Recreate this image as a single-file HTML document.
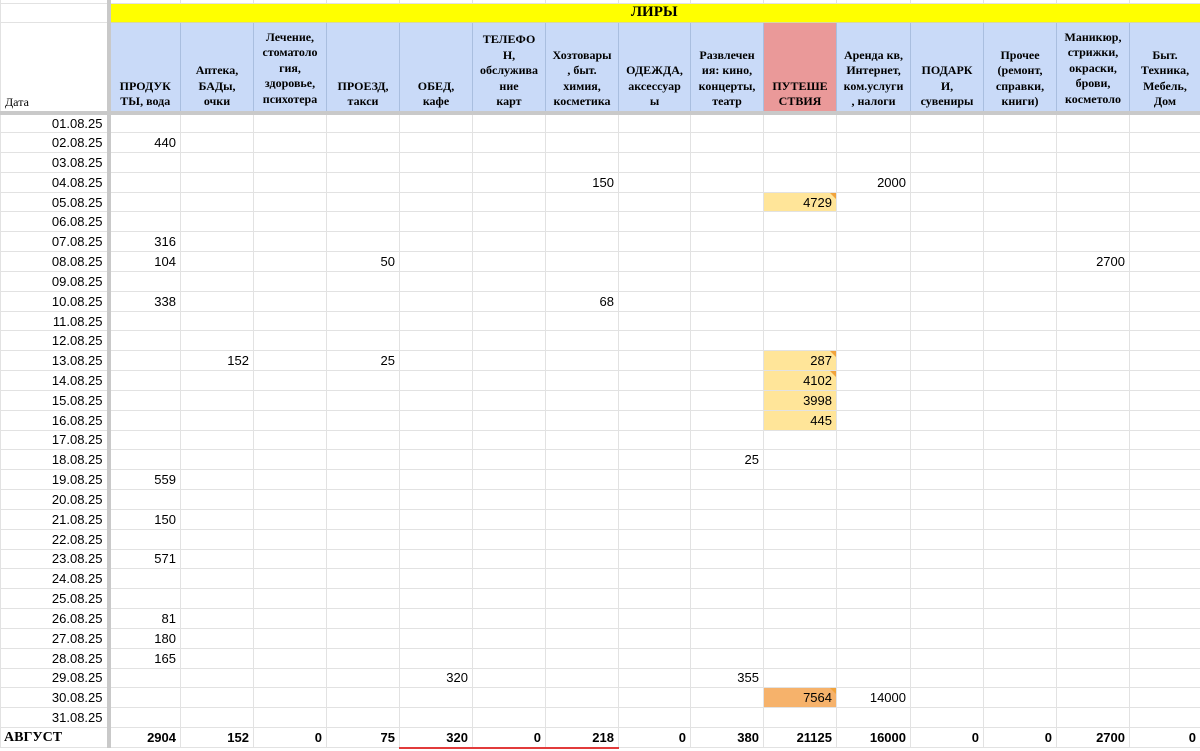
<!DOCTYPE html>
<html><head><meta charset="utf-8">
<style>
*{margin:0;padding:0;box-sizing:border-box}
body{width:1200px;height:751px;overflow:hidden;background:#fff;font-family:"Liberation Sans",Arial,sans-serif}
table{border-collapse:collapse;table-layout:fixed;width:1200px}
td{border:1px solid #e2e2e2;font-size:13px;text-align:right;padding:0 4px 0 2px;white-space:nowrap;overflow:hidden;height:19.84px;line-height:17px;position:relative;color:#000}
td:first-child{border-right:4px solid #c9c9c9}
tr.top td{height:3px;padding:0;border-top:none}
tr.y td.yl{background:#ffff00;font-family:"Liberation Serif",serif;font-weight:bold;font-size:15px;text-align:center;height:19px;line-height:17px;border-color:#d8d8a0}
tr.hd td{height:90px;background:#c9daf8;border-color:#a9bedf;border-bottom:4px solid #c9c9c9;padding:0;font-family:"Liberation Serif",serif;font-weight:bold;font-size:12px;vertical-align:bottom}
tr.hd td:first-child{background:#fff;border-color:#e2e2e2;border-right:4px solid #c9c9c9;border-bottom:4px solid #c9c9c9;font-weight:normal;text-align:left;padding-left:4px}
tr.hd td div{height:86px;overflow:hidden;position:relative}
tr.hd td span{position:absolute;left:0;right:0;bottom:1px;text-align:center;line-height:15.5px}
tr.hd td span.c{bottom:-12px}
tr.hd td.r{background:#ea9999}
td.a{background:#ffe599}
td.b{background:#f6b26b}
td.t::after{content:"";position:absolute;right:0;top:0;border-top:6px solid #f1a33c;border-left:6px solid transparent}
tr.tot td{font-weight:bold;height:20px}
tr.tot td:first-child{font-family:"Liberation Serif",serif;text-align:left;padding-left:3px;font-size:14px}
td.u{border-bottom:2px solid #e23b3b}
</style></head><body>
<table>
<colgroup><col style="width:108px"><col style="width:72px"><col style="width:73px"><col style="width:73px"><col style="width:73px"><col style="width:73px"><col style="width:73px"><col style="width:73px"><col style="width:72px"><col style="width:73px"><col style="width:73px"><col style="width:74px"><col style="width:73px"><col style="width:73px"><col style="width:73px"><col style="width:71px"></colgroup>
<tr class="top"><td></td><td></td><td></td><td></td><td></td><td></td><td></td><td></td><td></td><td></td><td></td><td></td><td></td><td></td><td></td><td></td></tr>
<tr class="y"><td></td><td class="yl" colspan="15">ЛИРЫ</td></tr>
<tr class="hd"><td>Дата</td>
<td><div><span>ПРОДУК<br>ТЫ, вода</span></div></td>
<td><div><span>Аптека,<br>БАДы,<br>очки</span></div></td>
<td><div><span class="c">Лечение,<br>стоматоло<br>гия,<br>здоровье,<br>психотера<br>пия, спорт</span></div></td>
<td><div><span>ПРОЕЗД,<br>такси</span></div></td>
<td><div><span>ОБЕД,<br>кафе</span></div></td>
<td><div><span>ТЕЛЕФО<br>Н,<br>обслужива<br>ние<br>карт</span></div></td>
<td><div><span>Хозтовары<br>, быт.<br>химия,<br>косметика</span></div></td>
<td><div><span>ОДЕЖДА,<br>аксессуар<br>ы</span></div></td>
<td><div><span>Развлечен<br>ия: кино,<br>концерты,<br>театр</span></div></td>
<td class="r"><div><span>ПУТЕШЕ<br>СТВИЯ</span></div></td>
<td><div><span>Аренда кв,<br>Интернет,<br>ком.услуги<br>, налоги</span></div></td>
<td><div><span>ПОДАРК<br>И,<br>сувениры</span></div></td>
<td><div><span>Прочее<br>(ремонт,<br>справки,<br>книги)</span></div></td>
<td><div><span class="c">Маникюр,<br>стрижки,<br>окраски,<br>брови,<br>косметоло<br>гия</span></div></td>
<td><div><span>Быт.<br>Техника,<br>Мебель,<br>Дом</span></div></td></tr>
<tr><td>01.08.25</td><td></td><td></td><td></td><td></td><td></td><td></td><td></td><td></td><td></td><td></td><td></td><td></td><td></td><td></td><td></td></tr>
<tr><td>02.08.25</td><td>440</td><td></td><td></td><td></td><td></td><td></td><td></td><td></td><td></td><td></td><td></td><td></td><td></td><td></td><td></td></tr>
<tr><td>03.08.25</td><td></td><td></td><td></td><td></td><td></td><td></td><td></td><td></td><td></td><td></td><td></td><td></td><td></td><td></td><td></td></tr>
<tr><td>04.08.25</td><td></td><td></td><td></td><td></td><td></td><td></td><td>150</td><td></td><td></td><td></td><td>2000</td><td></td><td></td><td></td><td></td></tr>
<tr><td>05.08.25</td><td></td><td></td><td></td><td></td><td></td><td></td><td></td><td></td><td></td><td class="a t">4729</td><td></td><td></td><td></td><td></td><td></td></tr>
<tr><td>06.08.25</td><td></td><td></td><td></td><td></td><td></td><td></td><td></td><td></td><td></td><td></td><td></td><td></td><td></td><td></td><td></td></tr>
<tr><td>07.08.25</td><td>316</td><td></td><td></td><td></td><td></td><td></td><td></td><td></td><td></td><td></td><td></td><td></td><td></td><td></td><td></td></tr>
<tr><td>08.08.25</td><td>104</td><td></td><td></td><td>50</td><td></td><td></td><td></td><td></td><td></td><td></td><td></td><td></td><td></td><td>2700</td><td></td></tr>
<tr><td>09.08.25</td><td></td><td></td><td></td><td></td><td></td><td></td><td></td><td></td><td></td><td></td><td></td><td></td><td></td><td></td><td></td></tr>
<tr><td>10.08.25</td><td>338</td><td></td><td></td><td></td><td></td><td></td><td>68</td><td></td><td></td><td></td><td></td><td></td><td></td><td></td><td></td></tr>
<tr><td>11.08.25</td><td></td><td></td><td></td><td></td><td></td><td></td><td></td><td></td><td></td><td></td><td></td><td></td><td></td><td></td><td></td></tr>
<tr><td>12.08.25</td><td></td><td></td><td></td><td></td><td></td><td></td><td></td><td></td><td></td><td></td><td></td><td></td><td></td><td></td><td></td></tr>
<tr><td>13.08.25</td><td></td><td>152</td><td></td><td>25</td><td></td><td></td><td></td><td></td><td></td><td class="a t">287</td><td></td><td></td><td></td><td></td><td></td></tr>
<tr><td>14.08.25</td><td></td><td></td><td></td><td></td><td></td><td></td><td></td><td></td><td></td><td class="a t">4102</td><td></td><td></td><td></td><td></td><td></td></tr>
<tr><td>15.08.25</td><td></td><td></td><td></td><td></td><td></td><td></td><td></td><td></td><td></td><td class="a">3998</td><td></td><td></td><td></td><td></td><td></td></tr>
<tr><td>16.08.25</td><td></td><td></td><td></td><td></td><td></td><td></td><td></td><td></td><td></td><td class="a">445</td><td></td><td></td><td></td><td></td><td></td></tr>
<tr><td>17.08.25</td><td></td><td></td><td></td><td></td><td></td><td></td><td></td><td></td><td></td><td></td><td></td><td></td><td></td><td></td><td></td></tr>
<tr><td>18.08.25</td><td></td><td></td><td></td><td></td><td></td><td></td><td></td><td></td><td>25</td><td></td><td></td><td></td><td></td><td></td><td></td></tr>
<tr><td>19.08.25</td><td>559</td><td></td><td></td><td></td><td></td><td></td><td></td><td></td><td></td><td></td><td></td><td></td><td></td><td></td><td></td></tr>
<tr><td>20.08.25</td><td></td><td></td><td></td><td></td><td></td><td></td><td></td><td></td><td></td><td></td><td></td><td></td><td></td><td></td><td></td></tr>
<tr><td>21.08.25</td><td>150</td><td></td><td></td><td></td><td></td><td></td><td></td><td></td><td></td><td></td><td></td><td></td><td></td><td></td><td></td></tr>
<tr><td>22.08.25</td><td></td><td></td><td></td><td></td><td></td><td></td><td></td><td></td><td></td><td></td><td></td><td></td><td></td><td></td><td></td></tr>
<tr><td>23.08.25</td><td>571</td><td></td><td></td><td></td><td></td><td></td><td></td><td></td><td></td><td></td><td></td><td></td><td></td><td></td><td></td></tr>
<tr><td>24.08.25</td><td></td><td></td><td></td><td></td><td></td><td></td><td></td><td></td><td></td><td></td><td></td><td></td><td></td><td></td><td></td></tr>
<tr><td>25.08.25</td><td></td><td></td><td></td><td></td><td></td><td></td><td></td><td></td><td></td><td></td><td></td><td></td><td></td><td></td><td></td></tr>
<tr><td>26.08.25</td><td>81</td><td></td><td></td><td></td><td></td><td></td><td></td><td></td><td></td><td></td><td></td><td></td><td></td><td></td><td></td></tr>
<tr><td>27.08.25</td><td>180</td><td></td><td></td><td></td><td></td><td></td><td></td><td></td><td></td><td></td><td></td><td></td><td></td><td></td><td></td></tr>
<tr><td>28.08.25</td><td>165</td><td></td><td></td><td></td><td></td><td></td><td></td><td></td><td></td><td></td><td></td><td></td><td></td><td></td><td></td></tr>
<tr><td>29.08.25</td><td></td><td></td><td></td><td></td><td>320</td><td></td><td></td><td></td><td>355</td><td></td><td></td><td></td><td></td><td></td><td></td></tr>
<tr><td>30.08.25</td><td></td><td></td><td></td><td></td><td></td><td></td><td></td><td></td><td></td><td class="b t">7564</td><td>14000</td><td></td><td></td><td></td><td></td></tr>
<tr><td>31.08.25</td><td></td><td></td><td></td><td></td><td></td><td></td><td></td><td></td><td></td><td></td><td></td><td></td><td></td><td></td><td></td></tr>
<tr class="tot"><td>АВГУСТ</td><td>2904</td><td>152</td><td>0</td><td>75</td><td class="u">320</td><td class="u">0</td><td class="u">218</td><td>0</td><td>380</td><td>21125</td><td>16000</td><td>0</td><td>0</td><td>2700</td><td>0</td></tr>
</table>
</body></html>
